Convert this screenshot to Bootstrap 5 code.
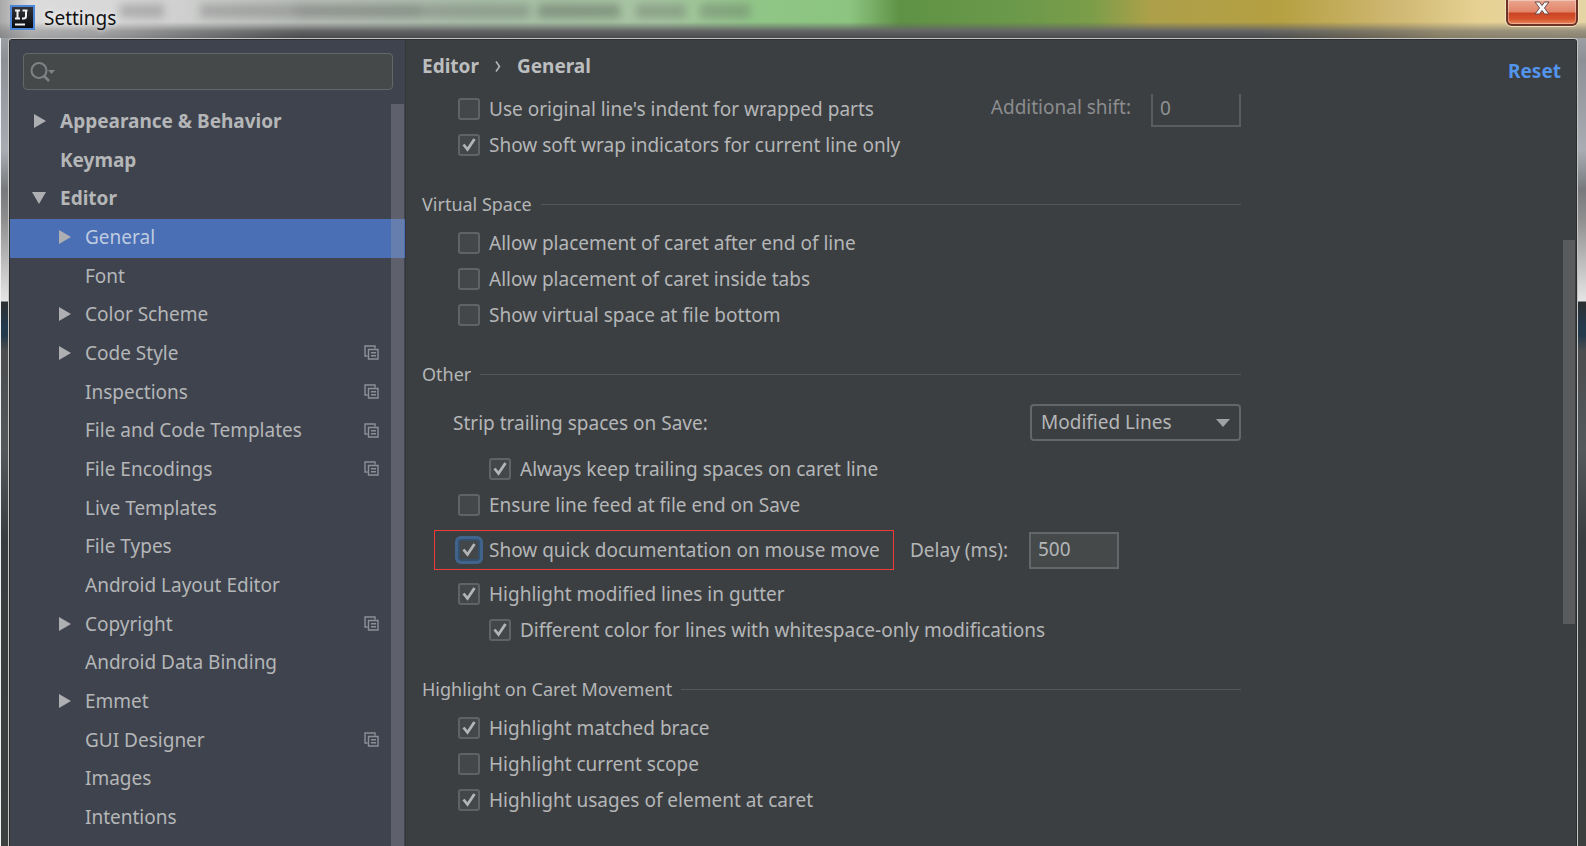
<!DOCTYPE html>
<html lang="en" data-bs-theme="dark">
<head>
<meta charset="utf-8">
<meta name="viewport" content="width=device-width, initial-scale=1">
<title>Settings</title>
<link href="https://cdn.jsdelivr.net/npm/bootstrap@5.3.0/dist/css/bootstrap.min.css" rel="stylesheet">
<style>
  :root {
    --panel: #3c3f41;
    --side: #3f434d;
    --ink: #b4b6b8;
    --line: #55585a;
    --edge: #646769;
  }
  body {
    font-family: "Noto Sans", "Open Sans", sans-serif;
    font-size: 19px;
    line-height: 28px;
    color: var(--ink);
    background:
      linear-gradient(90deg, #eef0f2 0 1px, transparent 1px),
      linear-gradient(#b5b7ba 0, #8d9196 60px, #a9adb3 150px, #77797c 190px, #8f8f8f 220px, #d5d5d5 285px, #e4e4e4 301px, #2c2e30 302px, #23394c 325px, #23394c 335px, #4a4c4e 350px, #55585a 450px, #3a3d3f 540px, #3c403f 100%);
  }
  /* glass title bar */
  .titlebar {
    height: 38px;
    position: relative;
    color: #111;
    background: linear-gradient(90deg, #a8a8a8 0, #dcdcdc 30px, #d6d6d6 130px, #bcc0bc 300px, #a9bfa8 480px, #a6c5a1 660px, #8fc586 760px, #8cc480 850px, #5f9245 900px, #6c994a 1020px, #7a9d49 1090px, #ada04a 1150px, #b5a042 1280px, #d0b974 1400px, #e7d294 1480px, #e5d5a5 100%);
  }
  .titlebar::before {
    content: "";
    position: absolute;
    left: 120px;
    top: 4px;
    width: 630px;
    height: 14px;
    filter: blur(4px);
    opacity: .3;
    background: linear-gradient(90deg, #555 0 44px, transparent 44px 80px, #555 80px 175px, #333 175px 300px, #555 300px 410px, transparent 410px 418px, #333 418px 500px, transparent 500px 516px, #555 516px 566px, transparent 566px 580px, #555 580px 100%);
  }
  .titlebar::after {
    content: "";
    position: absolute;
    inset: 0;
    pointer-events: none;
    background: linear-gradient(transparent 22px, #646466 31px, #48494c 38px);
    -webkit-mask-image: linear-gradient(90deg, rgba(0,0,0,.35) 0, rgba(0,0,0,.45) 100px, #000 300px, #000 1260px, rgba(0,0,0,.6) 1440px, rgba(0,0,0,.6));
    mask-image: linear-gradient(90deg, rgba(0,0,0,.35) 0, rgba(0,0,0,.45) 100px, #000 300px, #000 1260px, rgba(0,0,0,.6) 1440px, rgba(0,0,0,.6));
  }
  .title-text { font-size: 19px; color: #111; text-shadow: 0 0 6px #fff; z-index: 1; }
  .btn-x {
    width: 72px;
    height: 26px;
    margin-right: 8px;
    position: relative;
    z-index: 1;
    border: 2px solid #6d3226;
    border-top: 0;
    border-radius: 0 0 6px 6px;
    background: linear-gradient(#eba68f, #e08468 12px, #cc4422 13px, #d4532c 19px, #ec8a5d);
    box-shadow: 0 0 0 1px #f3e3c0, inset 0 0 0 1px rgba(255,255,255,.35);
  }
  .app-frame { margin: 0 8px; border: 1px solid #c3c4c6; border-bottom: 0; border-radius: 4px 4px 0 0; background: #2b2d2f; padding: 1px 1px 0; }
  .sidebar { width: 396px; background: var(--side); border-right: 1px solid #33363b; }
  .search-wrap { margin: 13px 12px 13px 13px; height: 37px; background: #45494a; border: 1px solid var(--edge); border-radius: 4px; padding-left: 6px; }
  .search-wrap:focus-within { border-color: #3d6185; }
  .search-box { background: transparent; border: 0; color: var(--ink); outline: 0; min-width: 0; }
  .tree-wrap { position: relative; }
  .tree-item { height: 39px; color: var(--ink); text-decoration: none; padding: 0 26px 4px 20px; }
  .tree-item:nth-child(3n) { height: 38px; }
  .tree-item:hover { color: #d0d2d4; }
  .tree-item .arrow { width: 18px; height: 14px; margin-right: 12px; flex: none; fill: #adafb3; }
  .tree-item.sub { padding-left: 45px; }
  .tree-item.active { background: #4a6fb5; color: #bfcbe0; }
  .copy-icon { width: 15px; height: 15px; fill: none; stroke: #8b9098; stroke-width: 1.4; }
  .side-thumb { position: absolute; top: 1px; right: 1px; bottom: 0; width: 13px; background: rgba(150,153,160,.36); }
  .main-pane { background: var(--panel); position: relative; }
  .crumbs { height: 54px; padding: 12px 15px 0 16px; font-weight: 700; color: #bbbdbf; }
  .crumbs a { color: inherit; text-decoration: none; }
  .crumbs .reset { color: #5394ec; margin-top: 5px; }
  .scroll-port { padding-left: 16px; }
  .form-body { max-width: 819px; margin-top: -4px; }
  .opt-group { margin-bottom: 27px; }
  .group-title { font-size: 18px; height: 28px; margin-bottom: 7px; color: var(--ink); font-weight: 400; line-height: 28px; }
  .group-title::after { content: ""; height: 1px; flex: 1; margin-left: 9px; background: var(--line); }
  .opt { min-height: 36px; padding-left: 36px; }
  .opt.deep { padding-left: 67px; }
  .opt .form-check-input, .quick .form-check-input {
    width: 22px; height: 22px; margin: 0 9px 0 0; flex: none;
    border: 2px solid #606365; border-radius: 3px; background-color: #43474a;
  }
  .form-check-input:checked {
    background-color: #43474a; border-color: #606365;
    background-size: 18px 18px;
    background-image: url("data:image/svg+xml,%3Csvg xmlns='http://www.w3.org/2000/svg' viewBox='0 0 18 18'%3E%3Cpath d='M3.500 8.500l4 5L14.500 3' fill='none' stroke='%23b2b4b5' stroke-width='2.800'/%3E%3C/svg%3E");
  }
  .quick .form-check-input.ringed { border-color: #35506c; box-shadow: 0 0 0 3px #41648c; }
  .quick-row { margin: 7px 0 6px 12px; }
  .quick { height: 40px; width: 460px; border: 1px solid #f03a37; padding-left: 23px; }
  .delay-label { width: 103px; }
  .num-field { width: 90px; height: 37px; background: #45494a; border: 2px solid var(--edge); border-radius: 0; color: var(--ink); padding: 0 7px 2px; font-size: 19px; }
  .num-field:disabled { background: var(--panel); color: #8f9193; border-color: #5a5d5f; opacity: 1; }
  .dim { color: #8b8d8f; }
  .strip-row { margin: 16px 0 10px; padding-left: 31px; }
  .mode-pick {
    width: 211px; height: 37px; padding: 0 30px 0 9px; font-size: 19px; color: var(--ink);
    border: 2px solid var(--edge); border-radius: 4px; background-color: var(--panel);
    background-size: 14px 8px; background-position: right 9px center;
    background-image: url("data:image/svg+xml,%3Csvg xmlns='http://www.w3.org/2000/svg' viewBox='0 0 14 8'%3E%3Cpath d='M0 0h14L7 8z' fill='%239fa1a3'/%3E%3C/svg%3E");
  }
  .main-thumb { position: absolute; right: 1px; top: 200px; width: 12px; height: 384px; background: #595b5d; }
</style>
</head>
<body class="vh-100 d-flex flex-column overflow-hidden">
<header class="titlebar d-flex align-items-start flex-shrink-0">
  <svg class="ms-2 mt-1 position-relative z-1" width="28" height="28" viewBox="0 0 28 28" aria-hidden="true">
    <defs><linearGradient id="ij" x2="0" y2="1"><stop stop-color="#35363c"/><stop offset="1" stop-color="#08090c"/></linearGradient></defs>
    <rect x="3" y="2" width="23" height="23" fill="url(#ij)" stroke="#4b86d8" stroke-width="2"/>
    <path d="M7 6.500h5M9.500 6.500v8M7 14.500h5M14.500 6.500h5M18 6.500v5.500q0 2.500-2.500 2.500h-1.500" fill="none" stroke="#f2f2f2" stroke-width="2"/>
    <path d="M7 20.500h10" stroke="#f2f2f2" stroke-width="2"/>
  </svg>
  <span class="title-text position-relative ps-2 pt-1">Settings</span>
  <button type="button" class="btn-x ms-auto p-0 d-flex justify-content-center" aria-label="Close">
    <svg width="20" height="16" viewBox="0 0 20 16"><path d="M3 2h4.500L10 5.500 12.500 2H17l-4.500 6L17 14h-4.500L10 10.500 7.500 14H3l4.500-6z" fill="#f4f4f4" stroke="#6a4a4a"/></svg>
  </button>
</header>

<div class="app-frame d-flex flex-grow-1 overflow-hidden">
  <aside class="sidebar d-flex flex-column flex-shrink-0">
    <div class="search-wrap d-flex align-items-center flex-shrink-0">
      <svg width="27" height="22" viewBox="0 0 27 22" aria-hidden="true"><circle cx="9" cy="9.500" r="7.500" fill="none" stroke="#7f8385" stroke-width="2"/><path d="M14 15l5 5" stroke="#7f8385" stroke-width="2.500"/><path d="M18 9h7l-3.500 4z" fill="#7f8385"/></svg>
      <input class="search-box flex-grow-1" type="text" aria-label="Search settings">
    </div>
    <div class="tree-wrap flex-grow-1 overflow-hidden">
      <nav class="d-flex flex-column" id="tree" aria-label="Settings categories">
        <a href="#" class="tree-item d-flex align-items-center flex-shrink-0 fw-bold"><svg class="arrow" viewBox="0 0 18 14"><path d="M4 0v14l12-7z"/></svg>Appearance &amp; Behavior</a>
        <a href="#" class="tree-item d-flex align-items-center flex-shrink-0 fw-bold"><span class="arrow"></span>Keymap</a>
        <a href="#" class="tree-item d-flex align-items-center flex-shrink-0 fw-bold"><svg class="arrow" viewBox="0 0 18 14"><path d="M2 1h14L9 13z"/></svg>Editor</a>
        <a href="#" class="tree-item sub active d-flex align-items-center flex-shrink-0"><svg class="arrow" viewBox="0 0 18 14"><path d="M4 0v14l12-7z"/></svg>General</a>
        <a href="#" class="tree-item sub d-flex align-items-center flex-shrink-0"><span class="arrow"></span>Font</a>
        <a href="#" class="tree-item sub d-flex align-items-center flex-shrink-0"><svg class="arrow" viewBox="0 0 18 14"><path d="M4 0v14l12-7z"/></svg>Color Scheme</a>
        <a href="#" class="tree-item sub d-flex align-items-center flex-shrink-0"><svg class="arrow" viewBox="0 0 18 14"><path d="M4 0v14l12-7z"/></svg>Code Style<svg class="copy-icon ms-auto" viewBox="0 0 15 15"><path d="M3.500 11H1V1h10v2.500M4.500 4.500H14V14H4.500zM7 7.800h5M7 10.800h5"/></svg></a>
        <a href="#" class="tree-item sub d-flex align-items-center flex-shrink-0"><span class="arrow"></span>Inspections<svg class="copy-icon ms-auto" viewBox="0 0 15 15"><path d="M3.500 11H1V1h10v2.500M4.500 4.500H14V14H4.500zM7 7.800h5M7 10.800h5"/></svg></a>
        <a href="#" class="tree-item sub d-flex align-items-center flex-shrink-0"><span class="arrow"></span>File and Code Templates<svg class="copy-icon ms-auto" viewBox="0 0 15 15"><path d="M3.500 11H1V1h10v2.500M4.500 4.500H14V14H4.500zM7 7.800h5M7 10.800h5"/></svg></a>
        <a href="#" class="tree-item sub d-flex align-items-center flex-shrink-0"><span class="arrow"></span>File Encodings<svg class="copy-icon ms-auto" viewBox="0 0 15 15"><path d="M3.500 11H1V1h10v2.500M4.500 4.500H14V14H4.500zM7 7.800h5M7 10.800h5"/></svg></a>
        <a href="#" class="tree-item sub d-flex align-items-center flex-shrink-0"><span class="arrow"></span>Live Templates</a>
        <a href="#" class="tree-item sub d-flex align-items-center flex-shrink-0"><span class="arrow"></span>File Types</a>
        <a href="#" class="tree-item sub d-flex align-items-center flex-shrink-0"><span class="arrow"></span>Android Layout Editor</a>
        <a href="#" class="tree-item sub d-flex align-items-center flex-shrink-0"><svg class="arrow" viewBox="0 0 18 14"><path d="M4 0v14l12-7z"/></svg>Copyright<svg class="copy-icon ms-auto" viewBox="0 0 15 15"><path d="M3.500 11H1V1h10v2.500M4.500 4.500H14V14H4.500zM7 7.800h5M7 10.800h5"/></svg></a>
        <a href="#" class="tree-item sub d-flex align-items-center flex-shrink-0"><span class="arrow"></span>Android Data Binding</a>
        <a href="#" class="tree-item sub d-flex align-items-center flex-shrink-0"><svg class="arrow" viewBox="0 0 18 14"><path d="M4 0v14l12-7z"/></svg>Emmet</a>
        <a href="#" class="tree-item sub d-flex align-items-center flex-shrink-0"><span class="arrow"></span>GUI Designer<svg class="copy-icon ms-auto" viewBox="0 0 15 15"><path d="M3.500 11H1V1h10v2.500M4.500 4.500H14V14H4.500zM7 7.800h5M7 10.800h5"/></svg></a>
        <a href="#" class="tree-item sub d-flex align-items-center flex-shrink-0"><span class="arrow"></span>Images</a>
        <a href="#" class="tree-item sub d-flex align-items-center flex-shrink-0"><span class="arrow"></span>Intentions</a>
      </nav>
      <div class="side-thumb"></div>
    </div>
  </aside>

  <main class="main-pane flex-grow-1 d-flex flex-column overflow-hidden">
    <div class="crumbs d-flex align-items-start flex-shrink-0">
      <a href="#">Editor</a>
      <svg class="mx-3 mt-2" width="6" height="13" viewBox="0 0 6 13" aria-hidden="true"><path d="M1 1.500l3.500 5L1 11.500" fill="none" stroke="#b4b6b8" stroke-width="1.600"/></svg>
      <span>General</span>
      <a href="#" class="reset ms-auto">Reset</a>
    </div>
    <div class="scroll-port flex-grow-1 overflow-hidden">
      <form class="form-body">
        <div class="opt-group">
          <div class="opt d-flex align-items-center">
            <input class="form-check-input" type="checkbox" id="indent"><label for="indent">Use original line's indent for wrapped parts</label>
            <label class="dim ms-auto pe-1 pb-1" for="shift">Additional shift:</label>
            <input class="num-field ms-3" type="text" id="shift" value="0" disabled>
          </div>
          <div class="opt d-flex align-items-center"><input class="form-check-input" type="checkbox" id="wrapind" checked><label for="wrapind">Show soft wrap indicators for current line only</label></div>
        </div>

        <section class="opt-group">
          <h2 class="group-title d-flex align-items-center">Virtual Space</h2>
          <div class="opt d-flex align-items-center"><input class="form-check-input" type="checkbox" id="aftereol"><label for="aftereol">Allow placement of caret after end of line</label></div>
          <div class="opt d-flex align-items-center"><input class="form-check-input" type="checkbox" id="intabs"><label for="intabs">Allow placement of caret inside tabs</label></div>
          <div class="opt d-flex align-items-center"><input class="form-check-input" type="checkbox" id="vbottom"><label for="vbottom">Show virtual space at file bottom</label></div>
        </section>

        <section class="opt-group">
          <h2 class="group-title d-flex align-items-center">Other</h2>
          <div class="strip-row d-flex align-items-center justify-content-between">
            <label for="strip">Strip trailing spaces on Save:</label>
            <select class="form-select mode-pick" id="strip"><option>Modified Lines</option><option>All</option><option>None</option></select>
          </div>
          <div class="opt deep d-flex align-items-center"><input class="form-check-input" type="checkbox" id="keep" checked><label for="keep">Always keep trailing spaces on caret line</label></div>
          <div class="opt d-flex align-items-center"><input class="form-check-input" type="checkbox" id="feed"><label for="feed">Ensure line feed at file end on Save</label></div>
          <div class="quick-row d-flex align-items-center">
            <div class="quick d-flex align-items-center"><input class="form-check-input ringed" type="checkbox" id="quick" checked><label for="quick" class="text-nowrap">Show quick documentation on mouse move</label></div>
            <label for="delay" class="delay-label ms-3 me-3">Delay (ms):</label>
            <input class="num-field" type="text" id="delay" value="500">
          </div>
          <div class="opt d-flex align-items-center"><input class="form-check-input" type="checkbox" id="gutter" checked><label for="gutter">Highlight modified lines in gutter</label></div>
          <div class="opt deep d-flex align-items-center"><input class="form-check-input" type="checkbox" id="white" checked><label for="white">Different color for lines with whitespace-only modifications</label></div>
        </section>

        <section class="opt-group">
          <h2 class="group-title d-flex align-items-center">Highlight on Caret Movement</h2>
          <div class="opt d-flex align-items-center"><input class="form-check-input" type="checkbox" id="brace" checked><label for="brace">Highlight matched brace</label></div>
          <div class="opt d-flex align-items-center"><input class="form-check-input" type="checkbox" id="scope"><label for="scope">Highlight current scope</label></div>
          <div class="opt d-flex align-items-center"><input class="form-check-input" type="checkbox" id="usages" checked><label for="usages">Highlight usages of element at caret</label></div>
        </section>
      </form>
    </div>
    <div class="main-thumb"></div>
  </main>
</div>
<script src="https://cdn.jsdelivr.net/npm/bootstrap@5.3.0/dist/js/bootstrap.bundle.min.js"></script>
</body>
</html>
